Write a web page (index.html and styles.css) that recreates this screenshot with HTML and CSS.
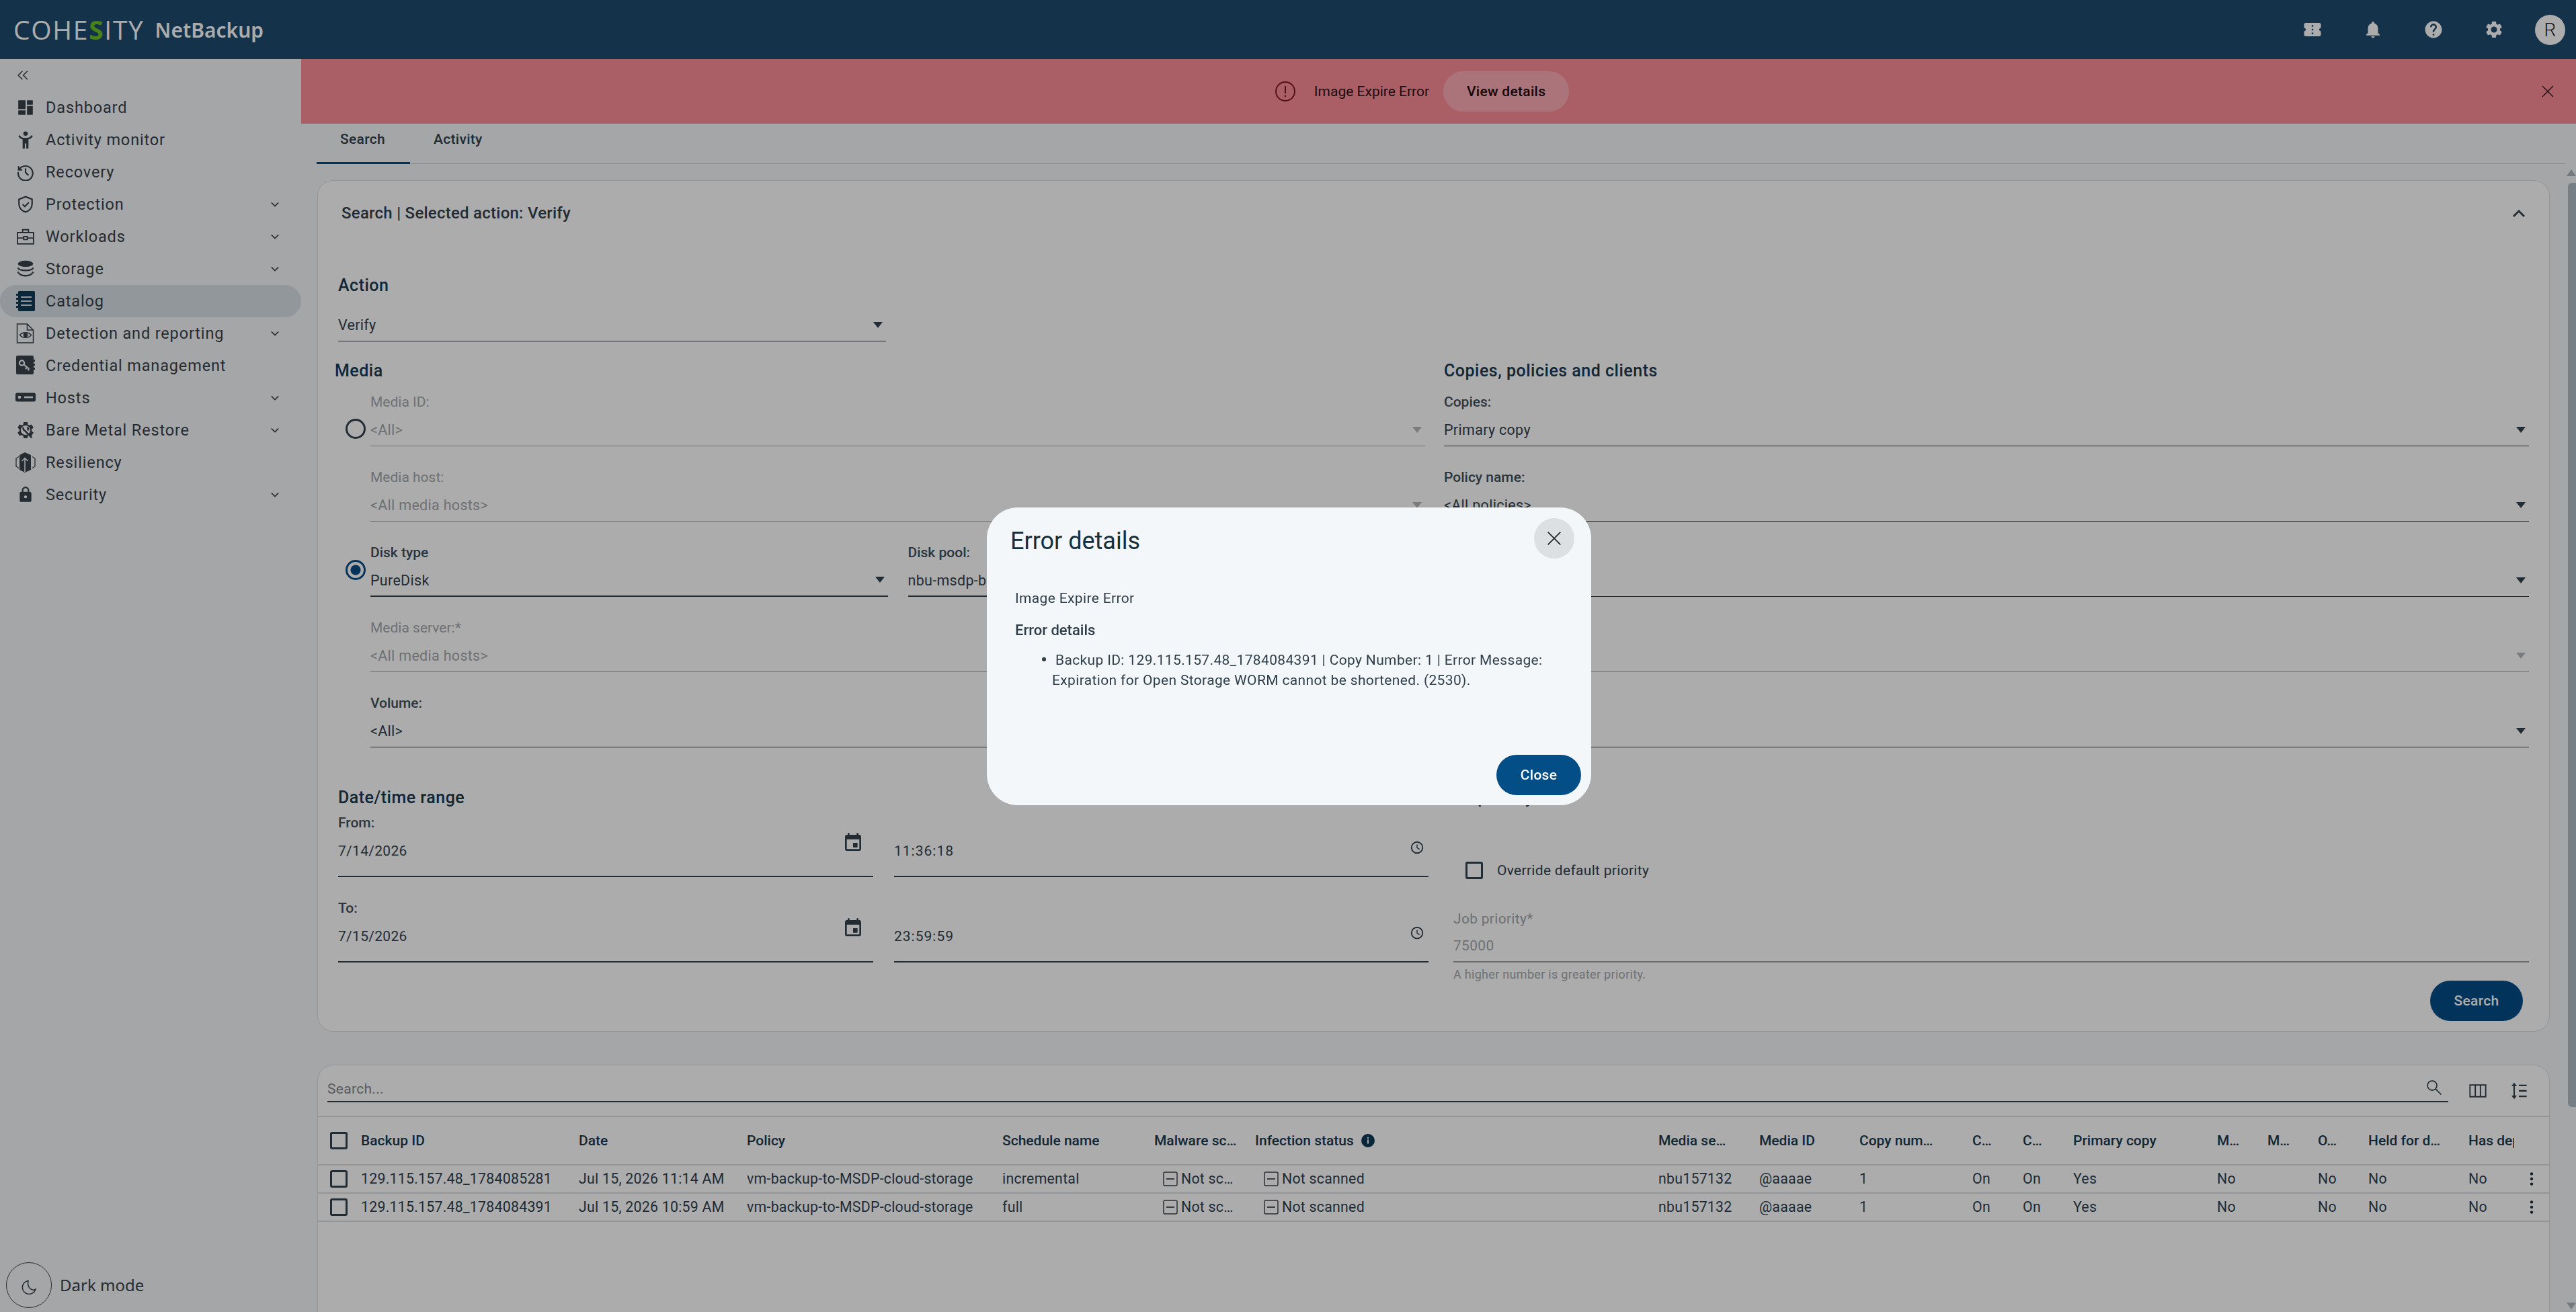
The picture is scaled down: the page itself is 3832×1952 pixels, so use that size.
FILE: index.html
```html
<!DOCTYPE html>
<html lang="en">
<head>
    <meta charset="UTF-8">
    <title>NetBackup - Catalog</title>
    <link rel="stylesheet" href="styles.css">
</head>
<body>
    <svg class="defs" width="0" height="0">
        <symbol id="i-chev" viewBox="0 0 24 24"><path d="M5 8.5l7 7 7-7" fill="none" stroke="currentColor" stroke-width="2"/></symbol>
        <symbol id="i-x" viewBox="0 0 24 24"><path d="M4 4l16 16M20 4L4 20" fill="none" stroke="currentColor" stroke-width="1.4"/></symbol>
        <symbol id="i-event" viewBox="0 0 24 24"><path d="M17 12h-5v5h5v-5zM16 1v2H8V1H6v2H5c-1.11 0-1.99.9-1.99 2L3 19c0 1.1.89 2 2 2h14c1.1 0 2-.9 2-2V5c0-1.1-.9-2-2-2h-1V1h-2zm3 18H5V8h14v11z" fill="currentColor"/></symbol>
        <symbol id="i-clock" viewBox="0 0 24 24"><circle cx="12" cy="12" r="9" fill="none" stroke="currentColor" stroke-width="2"/><path d="M12 7v5.5l4 2.4" fill="none" stroke="currentColor" stroke-width="1.6"/></symbol>
        <symbol id="i-minus" viewBox="0 0 22 22"><rect x="1" y="1" width="20" height="20" rx="2" fill="none" stroke="currentColor" stroke-width="1.5"/><path d="M5 11h12" stroke="currentColor" stroke-width="1.8"/></symbol>
        <symbol id="i-more" viewBox="0 0 24 24"><circle cx="12" cy="5" r="2" fill="currentColor"/><circle cx="12" cy="12" r="2" fill="currentColor"/><circle cx="12" cy="19" r="2" fill="currentColor"/></symbol>
    </svg>

    <header class="topbar">
        <div class="brand">
            <span class="brand_logo">COHE<span class="brand_s">S</span>ITY</span>
            <span class="brand_name">NetBackup</span>
        </div>
        <div class="top_icons">
            <svg class="top_icon" viewBox="0 0 24 24"><path d="M22 10V6c0-1.11-.9-2-2-2H4c-1.1 0-1.99.89-1.99 2v4c1.1 0 1.99.9 1.99 2s-.89 2-2 2v4c0 1.1.9 2 2 2h16c1.1 0 2-.9 2-2v-4c-1.1 0-2-.9-2-2s.9-2 2-2zm-9 7.5h-2v-2h2v2zm0-4.5h-2v-2h2v2zm0-4.5h-2v-2h2v2z"/></svg>
            <svg class="top_icon" viewBox="0 0 24 24"><path d="M12 22c1.1 0 2-.9 2-2h-4c0 1.1.9 2 2 2zm6-6v-5c0-3.07-1.63-5.64-4.5-6.32V4c0-.83-.67-1.5-1.5-1.5s-1.5.67-1.5 1.5v.68C7.64 5.36 6 7.92 6 11v5l-2 2v1h16v-1l-2-2z"/></svg>
            <svg class="top_icon" viewBox="0 0 24 24"><path d="M12 2C6.48 2 2 6.48 2 12s4.48 10 10 10 10-4.48 10-10S17.52 2 12 2zm1 17h-2v-2h2v2zm2.07-7.75l-.9.92C13.45 12.9 13 13.5 13 15h-2v-.5c0-1.1.45-2.1 1.17-2.83l1.24-1.26c.37-.36.59-.86.59-1.41 0-1.1-.9-2-2-2s-2 .9-2 2H8c0-2.21 1.79-4 4-4s4 1.79 4 4c0 .88-.36 1.68-.93 2.25z"/></svg>
            <svg class="top_icon" viewBox="0 0 24 24"><path d="M19.14 12.94c.04-.3.06-.61.06-.94 0-.32-.02-.64-.07-.94l2.03-1.58c.18-.14.23-.41.12-.61l-1.92-3.32c-.12-.22-.37-.29-.59-.22l-2.39.96c-.5-.38-1.03-.7-1.62-.94l-.36-2.54c-.04-.24-.24-.41-.48-.41h-3.84c-.24 0-.43.17-.47.41l-.36 2.54c-.59.24-1.13.57-1.62.94l-2.39-.96c-.22-.08-.47 0-.59.22L2.74 8.87c-.12.21-.08.47.12.61l2.03 1.58c-.05.3-.09.63-.09.94s.02.64.07.94l-2.03 1.58c-.18.14-.23.41-.12.61l1.92 3.32c.12.22.37.29.59.22l2.39-.96c.5.38 1.03.7 1.62.94l.36 2.54c.05.24.24.41.48.41h3.84c.24 0 .44-.17.47-.41l.36-2.54c.59-.24 1.13-.56 1.62-.94l2.39.96c.22.08.47 0 .59-.22l1.92-3.32c.12-.22.07-.47-.12-.61l-2.01-1.58zM12 15.6c-1.98 0-3.6-1.62-3.6-3.6s1.62-3.6 3.6-3.6 3.6 1.62 3.6 3.6-1.62 3.6-3.6 3.6z"/></svg>
            <span class="avatar">R</span>
        </div>
    </header>

    <div class="layout">
        <aside class="sidebar">
            <svg class="collapse" viewBox="0 0 16 16"><path d="M7.5 3L2.5 8l5 5M13.5 3l-5 5 5 5" fill="none" stroke="currentColor" stroke-width="1.2"/></svg>
            <nav class="menu">
                <a class="menu_item">
                    <svg class="menu_icon" viewBox="0 0 24 24"><path fill="currentColor" d="M2 2h10v12H2zM14 2h8v6h-8zM2 16h10v6H2zM14 10h8v12h-8z"/></svg>
                    <span class="menu_text">Dashboard</span>
                </a>
                <a class="menu_item">
                    <svg class="menu_icon" viewBox="0 0 24 24"><circle cx="12" cy="3.5" r="3" fill="currentColor"/><path fill="none" stroke="currentColor" stroke-width="2.4" stroke-linecap="round" d="M3.5 7c1.5 2.8 5 3.6 8.5 3.6S19 9.800 20.500 7"/><path fill="currentColor" d="M8 10h8v14h-3v-7h-2v7H8z"/></svg>
                    <span class="menu_text">Activity monitor</span>
                </a>
                <a class="menu_item">
                    <svg class="menu_icon" viewBox="0 0 24 24"><path fill="none" stroke="currentColor" stroke-width="2" d="M2.500 4v5h5M3.300 8.500A10 10 0 1 1 2 12M12 7v5.500l4 4"/></svg>
                    <span class="menu_text">Recovery</span>
                </a>
                <a class="menu_item">
                    <svg class="menu_icon" viewBox="0 0 24 24"><path fill="none" stroke="currentColor" stroke-width="2" d="M12 1.500l9 3.500v6.500c0 5.500-3.800 9.500-9 11-5.200-1.500-9-5.500-9-11V5zM8 12l3 3 5.500-5.500"/></svg>
                    <span class="menu_text">Protection</span>
                    <svg class="menu_chev"><use href="#i-chev"/></svg>
                </a>
                <a class="menu_item">
                    <svg class="menu_icon" viewBox="0 0 24 24"><path fill="none" stroke="currentColor" stroke-width="1.700" d="M1 6.500h22V22H1zM8 6.500V2.500h8v4M1 14h8M15 14h8M9.500 12h5v4h-5z"/></svg>
                    <span class="menu_text">Workloads</span>
                    <svg class="menu_chev"><use href="#i-chev"/></svg>
                </a>
                <a class="menu_item">
                    <svg class="menu_icon" viewBox="0 0 24 24"><ellipse cx="12" cy="5" rx="10.500" ry="4.200" fill="currentColor"/><path fill="none" stroke="currentColor" stroke-width="2.200" d="M1.500 10.500c1 2.400 5 3.700 10.500 3.700s9.500-1.300 10.500-3.700M1.500 16c1 3 5 5.500 10.500 5.500s9.500-2.500 10.500-5.500"/></svg>
                    <span class="menu_text">Storage</span>
                    <svg class="menu_chev"><use href="#i-chev"/></svg>
                </a>
                <a class="menu_item active">
                    <svg class="menu_icon menu_icon_big" viewBox="0 0 30 30"><path fill="currentColor" d="M4 1.500a1.500 1.500 0 0 1 1.500-1.500h22A2 2 0 0 1 29 2v26a2 2 0 0 1-2 2H5.500A1.500 1.500 0 0 1 4 28.500V25H1v-3h3v-3H1v-3h3v-3H1v-3h3V7H1V4h3z"/><path stroke="#d7e0e6" stroke-width="2.200" d="M8 9h16M8 15h16M8 21h16"/></svg>
                    <span class="menu_text">Catalog</span>
                </a>
                <a class="menu_item">
                    <svg class="menu_icon menu_icon_big" viewBox="0 0 30 30"><path fill="none" stroke="currentColor" stroke-width="1.500" d="M2.500 1h15l9 9v19h-24zM17.500 1v9h9"/><path fill="none" stroke="currentColor" stroke-width="1.300" d="M6.500 17.500c4-5 13-5 17 0-4 5-13 5-17 0z"/><circle cx="15" cy="17.500" r="3.300" fill="currentColor"/></svg>
                    <span class="menu_text">Detection and reporting</span>
                    <svg class="menu_chev"><use href="#i-chev"/></svg>
                </a>
                <a class="menu_item">
                    <svg class="menu_icon menu_icon_big" viewBox="0 0 30 30"><path fill="currentColor" d="M1 2a2 2 0 0 1 2-2h22a2 2 0 0 1 2 2v4h2v3h-2v3h2v3h-2v3h2v3h-2v5a2 2 0 0 1-2 2H3a2 2 0 0 1-2-2z"/><circle cx="9.500" cy="11" r="3.600" fill="none" stroke="#f4f6f9" stroke-width="2.200"/><path fill="none" stroke="#f4f6f9" stroke-width="2.200" d="M12.500 13.500l8 6.500M17 17.500l-2 2.500M20 20l-1.500 2"/></svg>
                    <span class="menu_text">Credential management</span>
                </a>
                <a class="menu_item">
                    <svg class="menu_icon menu_icon_big" viewBox="0 0 30 30"><rect y="7.500" width="30" height="13" rx="2.500" fill="currentColor"/><circle cx="6" cy="14" r="2.300" fill="#f4f6f9"/><rect x="13" y="12.700" width="13" height="2.600" fill="#f4f6f9"/></svg>
                    <span class="menu_text">Hosts</span>
                    <svg class="menu_chev"><use href="#i-chev"/></svg>
                </a>
                <a class="menu_item">
                    <svg class="menu_icon menu_icon_big" viewBox="0 0 24 24"><path fill="currentColor" d="M19.140 12.940c.04-.3.060-.61.060-.94 0-.32-.02-.64-.07-.94l2.030-1.580c.18-.14.230-.41.120-.61l-1.920-3.320c-.12-.22-.37-.29-.59-.22l-2.390.96c-.5-.38-1.030-.7-1.620-.94l-.36-2.540c-.04-.24-.24-.41-.48-.41h-3.840c-.24 0-.43.170-.47.41l-.36 2.540c-.59.240-1.130.57-1.620.94l-2.390-.96c-.22-.08-.47 0-.59.220L2.740 8.870c-.12.21-.08.47.12.61l2.030 1.580c-.05.3-.09.63-.09.94s.02.64.07.94l-2.030 1.580c-.18.14-.23.41-.12.61l1.920 3.320c.12.22.37.29.59.22l2.390-.96c.5.38 1.030.7 1.620.94l.36 2.540c.05.24.24.41.48.41h3.840c.24 0 .44-.17.47-.41l.36-2.540c.59-.24 1.130-.56 1.620-.94l2.390.96c.22.08.47 0 .59-.22l1.920-3.320c.12-.22.07-.47-.12-.61z"/><circle cx="12" cy="12" r="5.600" fill="#f4f6f9"/><path fill="none" stroke="currentColor" stroke-width="2" d="M9.500 8.500a3 3 0 0 0 1.500 4l8.500 8.500M14 8.300a3 3 0 0 1 .5 4"/></svg>
                    <span class="menu_text">Bare Metal Restore</span>
                    <svg class="menu_chev"><use href="#i-chev"/></svg>
                </a>
                <a class="menu_item">
                    <svg class="menu_icon menu_icon_big" viewBox="0 0 30 30"><path fill="currentColor" d="M14 0l9 4v22l-9 4-8-4V4z"/><path fill="none" stroke="currentColor" stroke-width="1.300" d="M5 6.500L1 9v12l4 2.500M25 6.500L29 9v12l-4 2.500"/><path fill="none" stroke="#f4f6f9" stroke-width="1.500" d="M14 29V9M9.500 13l4.500-4.500 4.500 4.500"/></svg>
                    <span class="menu_text">Resiliency</span>
                </a>
                <a class="menu_item">
                    <svg class="menu_icon" viewBox="0 0 24 24"><path fill="currentColor" d="M18 8h-1V6c0-2.760-2.240-5-5-5S7 3.240 7 6v2H6c-1.100 0-2 .9-2 2v10c0 1.100.9 2 2 2h12c1.100 0 2-.9 2-2V10c0-1.100-.9-2-2-2zm-6 9c-1.100 0-2-.9-2-2s.9-2 2-2 2 .9 2 2-.9 2-2 2zM9 8V6c0-1.660 1.340-3 3-3s3 1.340 3 3v2H9z"/></svg>
                    <span class="menu_text">Security</span>
                    <svg class="menu_chev"><use href="#i-chev"/></svg>
                </a>
            </nav>
            <div class="dark_mode">
                <span class="dark_btn">
                    <svg viewBox="0 0 24 24"><path fill="none" stroke="currentColor" stroke-width="1.500" d="M11 2.500a10 10 0 1 0 11 12.500c-1.800 1.200-5 1.500-7.500-.3C11 12 10 7 11 2.500z"/></svg>
                </span>
                <span class="dark_text">Dark mode</span>
            </div>
        </aside>

        <div class="main">
            <div class="alert">
                <svg class="alert_icon" viewBox="0 0 32 32"><circle cx="16" cy="16" r="14" fill="none" stroke="currentColor" stroke-width="2"/><path d="M16 8v11M16 21.500v3" stroke="currentColor" stroke-width="2"/></svg>
                <span class="alert_text">Image Expire Error</span>
                <button class="alert_btn">View details</button>
                <svg class="alert_close"><use href="#i-x"/></svg>
            </div>

            <div class="tabs">
                <a class="tab active">Search</a>
                <a class="tab">Activity</a>
            </div>

            <div class="content_wrap">
                <div class="content">
                    <section class="card search_card">
                        <div class="card_head">
                            <span class="card_title">Search | Selected action: Verify</span>
                            <svg class="card_toggle" viewBox="0 0 24 24"><path d="M4 17l8-8 8 8" fill="none" stroke="currentColor" stroke-width="3"/></svg>
                        </div>

                        <div class="action_block">
                            <div class="section_title">Action</div>
                            <div class="select action_select"><span>Verify</span><i class="caret"></i></div>
                        </div>

                        <div class="form_cols">
                            <div class="form_left">
                                <div class="section_title">Media</div>
                                <div class="radio_row">
                                    <span class="radio radio_media"></span>
                                    <div class="field off">
                                        <label>Media ID:</label>
                                        <div class="select"><span>&lt;All&gt;</span><i class="caret"></i></div>
                                    </div>
                                </div>
                                <div class="radio_row indent">
                                    <div class="field off">
                                        <label>Media host:</label>
                                        <div class="select"><span>&lt;All media hosts&gt;</span><i class="caret"></i></div>
                                    </div>
                                </div>
                                <div class="radio_row">
                                    <span class="radio radio_disk on"></span>
                                    <div class="field">
                                        <label>Disk type</label>
                                        <div class="select strong"><span>PureDisk</span><i class="caret"></i></div>
                                    </div>
                                    <div class="field">
                                        <label>Disk pool:</label>
                                        <div class="select strong"><span>nbu-msdp-b</span></div>
                                    </div>
                                </div>
                                <div class="radio_row indent">
                                    <div class="field off">
                                        <label>Media server:*</label>
                                        <div class="select"><span>&lt;All media hosts&gt;</span></div>
                                    </div>
                                </div>
                                <div class="radio_row indent">
                                    <div class="field">
                                        <label>Volume:</label>
                                        <div class="select"><span>&lt;All&gt;</span></div>
                                    </div>
                                </div>

                                <div class="date_block">
                                    <div class="section_title">Date/time range</div>
                                    <div class="date_row">
                                        <div class="field tall">
                                            <label>From:</label>
                                            <div class="select"><span>7/14/2026</span><svg class="cal"><use href="#i-event"/></svg></div>
                                        </div>
                                        <div class="field tall">
                                            <label>&nbsp;</label>
                                            <div class="select"><span class="spaced">11:36:18</span><svg class="clock"><use href="#i-clock"/></svg></div>
                                        </div>
                                    </div>
                                    <div class="date_row">
                                        <div class="field tall">
                                            <label>To:</label>
                                            <div class="select"><span>7/15/2026</span><svg class="cal"><use href="#i-event"/></svg></div>
                                        </div>
                                        <div class="field tall">
                                            <label>&nbsp;</label>
                                            <div class="select"><span class="spaced">23:59:59</span><svg class="clock"><use href="#i-clock"/></svg></div>
                                        </div>
                                    </div>
                                </div>
                            </div>

                            <div class="form_right">
                                <div class="section_title">Copies, policies and clients</div>
                                <div class="field">
                                    <label>Copies:</label>
                                    <div class="select"><span>Primary copy</span><i class="caret"></i></div>
                                </div>
                                <div class="field">
                                    <label>Policy name:</label>
                                    <div class="select"><span>&lt;All policies&gt;</span><i class="caret"></i></div>
                                </div>
                                <div class="field">
                                    <label>&nbsp;</label>
                                    <div class="select"><span>&nbsp;</span><i class="caret"></i></div>
                                </div>
                                <div class="field off">
                                    <label>&nbsp;</label>
                                    <div class="select"><span>&nbsp;</span><i class="caret"></i></div>
                                </div>
                                <div class="field">
                                    <label>&nbsp;</label>
                                    <div class="select"><span>&nbsp;</span><i class="caret"></i></div>
                                </div>

                                <div class="priority_block">
                                    <div class="section_title">Job priority</div>
                                    <div class="check_row"><span class="checkbox"></span><span>Override default priority</span></div>
                                    <div class="priority_field">
                                        <label>Job priority*</label>
                                        <div class="priority_value">75000</div>
                                    </div>
                                    <div class="priority_foot">
                                        <span class="hint">A higher number is greater priority.</span>
                                        <button class="btn_primary">Search</button>
                                    </div>
                                </div>
                            </div>
                        </div>
                    </section>

                    <section class="card table_card">
                        <div class="table_tools">
                            <div class="table_search">
                                <span>Search...</span>
                                <svg class="tool_search" viewBox="0 0 24 24"><circle cx="9.500" cy="9.500" r="6" fill="none" stroke="currentColor" stroke-width="1.400"/><path d="M14 14l7 7" stroke="currentColor" stroke-width="1.500"/></svg>
                            </div>
                            <svg class="tool_icon" viewBox="0 0 24 24"><path fill="none" stroke="currentColor" stroke-width="1.600" d="M2 4.500h20v15H2zM8.700 4.500v15M15.300 4.500v15"/></svg>
                            <svg class="tool_icon" viewBox="0 0 24 24"><path fill="none" stroke="currentColor" stroke-width="1.800" d="M6 5v14"/><path fill="currentColor" d="M6 1.500L9.500 6h-7zM6 22.500L2.500 18h7z"/><path stroke="currentColor" stroke-width="2" d="M12 5h10M12 12h10M12 19h10"/></svg>
                        </div>

                        <div class="tbl_row tbl_head">
                            <span class="checkbox"></span>
                            <span>Backup ID</span><span>Date</span><span>Policy</span><span>Schedule name</span>
                            <span>Malware sc…</span>
                            <span class="with_info">Infection status
                                <svg class="info" viewBox="0 0 20 20"><circle cx="10" cy="10" r="10" fill="currentColor"/><path d="M10 8.500v6M10 5v2" stroke="#fff" stroke-width="2"/></svg>
                            </span>
                            <span>Media se…</span><span>Media ID</span><span>Copy num…</span><span>C…</span><span>C…</span>
                            <span>Primary copy</span><span>M…</span><span>M…</span><span>O…</span><span>Held for d…</span><span class="clip">Has dependencies</span><span></span>
                        </div>

                        <div class="tbl_row">
                            <span class="checkbox"></span>
                            <span>129.115.157.48_1784085281</span><span>Jul 15, 2026 11:14 AM</span><span>vm-backup-to-MSDP-cloud-storage</span><span>incremental</span>
                            <span class="scan"><svg><use href="#i-minus"/></svg>Not sc…</span>
                            <span class="scan"><svg><use href="#i-minus"/></svg>Not scanned</span>
                            <span>nbu157132</span><span>@aaaae</span><span>1</span><span>On</span><span>On</span><span>Yes</span><span>No</span><span></span><span>No</span><span>No</span><span>No</span>
                            <svg class="kebab"><use href="#i-more"/></svg>
                        </div>
                        <div class="tbl_row">
                            <span class="checkbox"></span>
                            <span>129.115.157.48_1784084391</span><span>Jul 15, 2026 10:59 AM</span><span>vm-backup-to-MSDP-cloud-storage</span><span>full</span>
                            <span class="scan"><svg><use href="#i-minus"/></svg>Not sc…</span>
                            <span class="scan"><svg><use href="#i-minus"/></svg>Not scanned</span>
                            <span>nbu157132</span><span>@aaaae</span><span>1</span><span>On</span><span>On</span><span>Yes</span><span>No</span><span></span><span>No</span><span>No</span><span>No</span>
                            <svg class="kebab"><use href="#i-more"/></svg>
                        </div>
                    </section>
                </div>

                <div class="scrollbar">
                    <i class="scroll_up"></i>
                    <i class="scroll_thumb"></i>
                    <i class="scroll_down"></i>
                </div>
            </div>
        </div>
    </div>

    <div class="scrim"></div>

    <div class="dialog">
        <div class="dialog_head">
            <h2>Error details</h2>
            <button class="dialog_x"><svg><use href="#i-x"/></svg></button>
        </div>
        <div class="dialog_body">
            <p>Image Expire Error</p>
            <h3>Error details</h3>
            <ul>
                <li>Backup ID: 129.115.157.48_1784084391 | Copy Number: 1 | Error Message: Expiration for Open Storage WORM cannot be shortened. (2530).</li>
            </ul>
        </div>
        <div class="dialog_foot"><button class="btn_close">Close</button></div>
    </div>
</body>
</html>
```

FILE: styles.css
```css
* { box-sizing: border-box; }
html, body { margin: 0; padding: 0; height: 100%; }
body { width: 3832px; height: 1952px; overflow: hidden; background: #f4f6f9; color: #33424e; font: 22px/32px Roboto, "Liberation Sans", sans-serif; display: flex; flex-direction: column; letter-spacing: .3px; }
a { text-decoration: none; color: inherit; }
button { font: inherit; border: 0; cursor: pointer; letter-spacing: inherit; }
.defs { position: absolute; }

/* top bar */
.topbar { height: 88px; flex: none; background: #1f4a6e; color: #fff; display: flex; align-items: center; justify-content: space-between; padding: 0 16px 0 20px; }
.brand { display: flex; align-items: center; gap: 16px; }
.brand_logo { font: 400 39px/44px "Open Sans", sans-serif; letter-spacing: 1.7px; }
.brand_s { color: #6cc024; font-weight: 700; }
.brand_name { font: 600 30px/44px "Noto Sans", sans-serif; letter-spacing: 0; margin-top: 2px; }
.top_icons { display: flex; align-items: center; }
.top_icon { width: 30px; height: 30px; fill: #fff; margin-right: 60px; }
.avatar { width: 45px; height: 45px; margin-left: -14px; border-radius: 50%; background: #fff; color: #222; font: 300 28px/45px Roboto, sans-serif; text-align: center; }

.layout { flex: 1; display: flex; min-height: 0; }

/* sidebar */
.sidebar { width: 448px; flex: none; display: flex; flex-direction: column; color: #38424a; }
.collapse { width: 20px; height: 20px; margin: 14px 0 0 24px; flex: none; }
.menu { display: flex; flex-direction: column; margin-top: 14px; }
.menu_item { height: 48px; display: flex; align-items: center; border-radius: 24px; padding-left: 22px; letter-spacing: .85px; font-size: 23.5px; }
.menu_item.active { background: #d7e0e6; }
.menu_item.active .menu_icon { color: #0f3a57; }
.menu_icon { width: 26px; height: 26px; margin: 0 17px 0 3px; flex: none; }
.menu_icon_big { width: 30px; height: 30px; margin: 0 15px 0 1px; }
.menu_chev { width: 18px; height: 18px; margin-left: auto; margin-right: 30px; }
.dark_mode { margin-top: auto; display: flex; align-items: center; padding: 0 0 6px 9px; }
.dark_btn { width: 68px; height: 68px; border: 1px solid #38424a; border-radius: 50%; display: flex; align-items: center; justify-content: center; }
.dark_btn svg { width: 24px; height: 24px; margin-top: 6px; }
.dark_text { font: 24px/32px "Noto Sans", sans-serif; margin-left: 12px; letter-spacing: 0; }

/* main */
.main { flex: 1; display: flex; flex-direction: column; min-width: 0; }
.alert { height: 96px; flex: none; background: #fd8e99; color: #2e1013; display: flex; align-items: center; justify-content: center; padding-right: 50px; position: relative; }
.alert_icon { width: 32px; height: 32px; color: #7a1a20; margin-right: 27px; }
.alert_text { letter-spacing: 0; font-size: 21px; }
.alert_btn { height: 60px; width: 187px; margin-left: 21px; border-radius: 30px; background: rgba(255,255,255,.28); color: #20090b; font-weight: 500; font-size: 21px; }
.alert_close { position: absolute; right: 30px; top: 36px; width: 24px; height: 24px; }

.tabs { height: 60px; flex: none; margin: 0 16px 0 23px; display: flex; font-weight: 500; font-size: 21px; border-bottom: 1px solid #d0d3d6; }
.tab { height: 60px; padding: 0 35px; line-height: 46px; }
.tab.active { border-bottom: 3px solid #044e88; width: 139px; }

.content_wrap { flex: 1; display: flex; min-height: 0; }
.content { flex: 1; min-width: 0; padding: 24px 23px 0 24px; display: flex; flex-direction: column; gap: 49px; overflow: hidden; }
.card { background: #fff; border: 1px solid #dadde0; border-radius: 24px; flex: none; }
.scrollbar { width: 16px; flex: none; display: flex; flex-direction: column; align-items: flex-end; padding-top: 8px; }
.scroll_up { width: 0; height: 0; border: 7px solid transparent; border-top: 0; border-bottom: 10px solid #aeb6bd; }
.scroll_thumb { width: 12px; flex: none; height: 1375px; margin-top: 10px; background: #b1bcc7; border-radius: 6px 0 0 6px; }
.scroll_down { width: 0; height: 0; border: 7px solid transparent; border-bottom: 0; border-top: 10px solid #aeb6bd; margin-top: auto; margin-bottom: 4px; }

/* search card */
.card_head { height: 96px; display: flex; align-items: center; justify-content: space-between; padding: 0 33px 0 35px; }
.card_title { font-weight: 500; font-size: 24px; letter-spacing: .25px; }
.card_toggle { width: 24px; height: 24px; }
.section_title { font-weight: 500; font-size: 25px; color: #1a3a50; letter-spacing: .5px; }
.action_block { padding: 44px 0 0 30px; }
.action_select { width: 815px; margin-top: 27px; }
.form_cols { display: grid; grid-template-columns: 1626px 1614px; column-gap: 24px; margin: 28px 0 0 25px; }

.field { flex: 1; min-width: 0; margin-top: 32px; }
.field label { display: block; line-height: 28px; margin-bottom: 12px; font-weight: 500; font-size: 21px; letter-spacing: 0; color: #40505c; }
.select { display: flex; align-items: center; justify-content: space-between; height: 40px; padding-bottom: 7px; border-bottom: 1px solid #33424e; position: relative; font-size: 21.5px; }
.select.strong { border-bottom-width: 2px; }
.field.off label, .field.off .select { color: #a3a8ac; }
.field.off .select { border-bottom: 1px solid #a3a8ac; }
.field.off label { font-weight: 400; }
.caret { width: 0; height: 0; margin: -2px 5px 0 0; border: 7px solid transparent; border-bottom: 0; border-top: 9px solid #33424e; }
.field.off .caret { border-top-color: #b3b8bc; }
.form_left .section_title + .radio_row .field, .form_right .section_title + .field { margin-top: 16px; }
.radio_row { display: flex; gap: 30px; padding-right: 4px; }
.radio_row.indent { padding-left: 53px; }
.radio { width: 30px; height: 30px; border: 3px solid #33424e; border-radius: 50%; margin: 0 -23px 0 16px; flex: none; }
.radio_media { margin-top: 55px; }
.radio_disk { margin-top: 57px; }
.radio.on { border-color: #044e88; background: radial-gradient(circle, #044e88 0 7px, transparent 8px); }

.date_block { margin-top: 59px; padding-left: 5px; width: 1627px; }
.date_block .section_title { margin-bottom: -25px; }
.date_row { display: grid; grid-template-columns: 796px 795px; column-gap: 31px; }
.field.tall .select { height: 55px; padding-bottom: 21px; font-size: 21px; border-bottom-width: 2px; }
.spaced { letter-spacing: 1px; }
.cal { width: 32px; height: 32px; position: absolute; right: 14px; top: -12px; }
.clock { width: 22px; height: 22px; position: absolute; right: 6px; top: 0; }

.priority_block { margin-top: 59px; }
.check_row { display: flex; align-items: center; gap: 21px; height: 28px; margin: 78px 0 0 32px; font-size: 21px; }
.checkbox { width: 26px; height: 26px; border: 3px solid #33424e; border-radius: 3px; flex: none; display: block; }
.priority_field { margin: 44px 0 0 14px; padding-bottom: 7px; border-bottom: 2px solid #9da2a6; color: #a3a8ac; font-size: 21px; }
.priority_field label { display: block; line-height: 28px; margin-bottom: 10px; }
.priority_foot { display: flex; justify-content: space-between; align-items: flex-start; padding: 0 9px 15px 14px; }
.hint { margin-top: 6px; font-size: 18px; line-height: 24px; color: #a3a8ac; }
.btn_primary { width: 138px; height: 60px; margin-top: 27px; border-radius: 30px; background: #044e88; color: #fff; font-weight: 500; font-size: 21px; }

/* results table */
.table_card { flex: 1 0 600px; }
.table_tools { height: 77px; display: flex; align-items: flex-start; border-bottom: 2px solid #dadde0; padding: 19px 0 0 14px; }
.table_search { width: 3155px; height: 36px; border-bottom: 2px solid #33424e; display: flex; justify-content: space-between; color: #7f878d; font-size: 21px; line-height: 32px; }
.tool_search { width: 28px; height: 28px; margin-right: 7px; color: #33424e; }
.tool_icon { width: 28px; height: 28px; margin-left: 30px; margin-top: 5px; color: #33424e; flex: none; }
.tool_icon + .tool_icon { margin-left: 33px; }
.tbl_row { display: grid; grid-template-columns: 46px 324px 250px 380px 226px 150px 600px 150px 149px 168px 75px 75px 214px 75px 75px 75px 149px 68px 53px; align-items: center; height: 42px; padding-left: 18px; border-bottom: 2px solid #dadde0; font-size: 21.3px; letter-spacing: .25px; white-space: nowrap; color: #2e4252; }
.tbl_head { height: 72px; font-weight: 500; font-size: 21px; color: #1a3a50; letter-spacing: 0; }
.clip { overflow: hidden; }
.with_info { display: flex; align-items: center; gap: 11px; }
.info { width: 20px; height: 20px; color: #0f3a57; }
.scan { display: flex; align-items: center; gap: 5px; padding-left: 13px; }
.scan svg { width: 22px; height: 22px; flex: none; color: #40464c; }
.kebab { width: 26px; height: 26px; justify-self: center; margin-right: 2px; color: #222c34; }

/* modal */
.scrim { position: fixed; inset: 0; background: rgba(0,0,0,.325); }
.dialog { position: fixed; left: 1468px; top: 755px; width: 899px; height: 443px; border-radius: 46px; background: #f3f7f9; color: #2f3f4a; display: flex; flex-direction: column; }
.dialog_head { display: flex; justify-content: space-between; padding: 16px 25px 0 35px; height: 106px; }
.dialog_head h2 { margin: 12px 0 0; font-weight: 400; font-size: 36px; line-height: 44px; color: #13303f; letter-spacing: 0; }
.dialog_x { width: 60px; height: 60px; padding: 0; border-radius: 50%; background: #dde0e3; color: #222; display: flex; align-items: center; justify-content: center; }
.dialog_x svg { width: 28px; height: 28px; }
.dialog_body { flex: 1; padding: 14px 30px 0 42px; font-size: 21px; letter-spacing: .35px; line-height: 30px; }
.dialog_body p { margin: 0; }
.dialog_body h3 { margin: 18px 0 0; font-weight: 500; font-size: 22px; line-height: 30px; letter-spacing: 0; }
.dialog_body ul { margin: 14px 0 0; padding: 0 0 0 55px; list-style: none; }
.dialog_body li::before { content: "•"; display: inline-block; width: 22px; margin-left: -17px; font-size: 30px; line-height: 0; vertical-align: -3px; }
.dialog_foot { display: flex; justify-content: flex-end; padding: 0 15px 15px 0; }
.btn_close { width: 126px; height: 60px; border-radius: 30px; background: #044e88; color: #fff; font-weight: 500; font-size: 21px; }
```
